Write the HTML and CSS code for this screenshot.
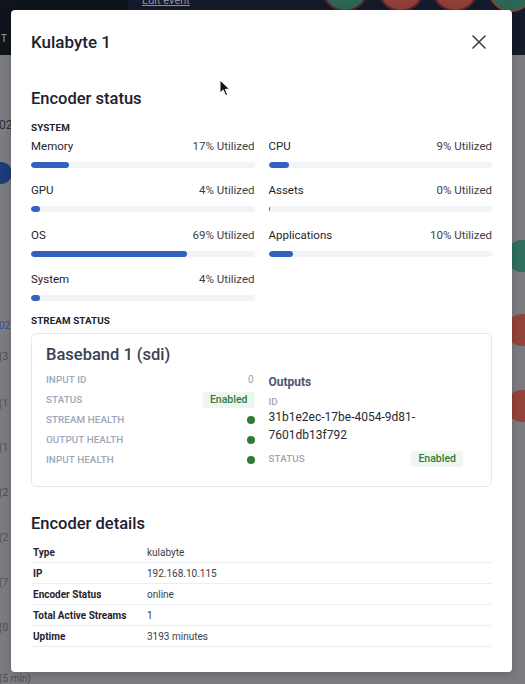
FILE: index.html
```html
<!DOCTYPE html>
<html>
<head>
<meta charset="utf-8">
<link rel="stylesheet" href="styles.css">
</head>
<body>
<div class="backdrop">
  <div class="topbar">
    <span class="topbar-left"></span>
    <span class="edit-link">Edit event</span>
    <span class="glyph-t">T</span>
  </div>
  <span class="bubble bubble-g1"></span>
  <span class="bubble bubble-r1"></span>
  <span class="bubble bubble-r2"></span>
  <span class="bubble bubble-g2"></span>
  <span class="side-dot side-green"></span>
  <span class="side-dot side-red1"></span>
  <span class="side-dot side-red2"></span>
  <span class="left-dot"></span>
  <span class="bg-text t1">02</span>
  <span class="bg-text t2 blue">023</span>
  <span class="bg-text t3">(3</span>
  <span class="bg-text t4">(1</span>
  <span class="bg-text t5">(1</span>
  <span class="bg-text t6">(2</span>
  <span class="bg-text t7">(2</span>
  <span class="bg-text t8">(7</span>
  <span class="bg-text t9">(0</span>
  <span class="bg-text t10">(5 min)</span>
</div>

<div class="modal">
  <div class="modal-header">
    <h1 class="modal-title">Kulabyte 1</h1>
    <button class="close-btn" aria-label="Close">
      <svg width="14" height="14" viewBox="0 0 14 14"><path d="M1 1L13 13M13 1L1 13" stroke="#3b404d" stroke-width="1.6" stroke-linecap="round"/></svg>
    </button>
  </div>

  <h2 class="section-title first">Encoder status</h2>
  <div class="caption">SYSTEM</div>
  <div class="metrics">
    <div class="metric">
      <div class="metric-head"><span class="metric-name">Memory</span><span class="metric-val">17% Utilized</span></div>
      <div class="track"><div class="fill" style="width:17%"></div></div>
    </div>
    <div class="metric">
      <div class="metric-head"><span class="metric-name">CPU</span><span class="metric-val">9% Utilized</span></div>
      <div class="track"><div class="fill" style="width:9%"></div></div>
    </div>
    <div class="metric">
      <div class="metric-head"><span class="metric-name">GPU</span><span class="metric-val">4% Utilized</span></div>
      <div class="track"><div class="fill" style="width:4%"></div></div>
    </div>
    <div class="metric">
      <div class="metric-head"><span class="metric-name">Assets</span><span class="metric-val">0% Utilized</span></div>
      <div class="track"><div class="fill" style="width:0.6%"></div></div>
    </div>
    <div class="metric">
      <div class="metric-head"><span class="metric-name">OS</span><span class="metric-val">69% Utilized</span></div>
      <div class="track"><div class="fill" style="width:70%"></div></div>
    </div>
    <div class="metric">
      <div class="metric-head"><span class="metric-name">Applications</span><span class="metric-val">10% Utilized</span></div>
      <div class="track"><div class="fill" style="width:11%"></div></div>
    </div>
    <div class="metric">
      <div class="metric-head"><span class="metric-name">System</span><span class="metric-val">4% Utilized</span></div>
      <div class="track"><div class="fill" style="width:4%"></div></div>
    </div>
  </div>

  <div class="caption stream-caption">STREAM STATUS</div>
  <div class="stream-card">
    <div class="stream-title">Baseband 1 (sdi)</div>
    <div class="stream-grid">
      <div class="stream-col">
        <div class="kv"><span class="k">INPUT ID</span><span class="v-num">0</span></div>
        <div class="kv"><span class="k">STATUS</span><span class="badge">Enabled</span></div>
        <div class="kv"><span class="k">STREAM HEALTH</span><span class="dot"></span></div>
        <div class="kv"><span class="k">OUTPUT HEALTH</span><span class="dot"></span></div>
        <div class="kv"><span class="k">INPUT HEALTH</span><span class="dot"></span></div>
      </div>
      <div class="stream-col outputs">
        <div class="outputs-title">Outputs</div>
        <div class="k id-label">ID</div>
        <div class="id-value">31b1e2ec-17be-4054-9d81-7601db13f792</div>
        <div class="kv out-status"><span class="k">STATUS</span><span class="badge">Enabled</span></div>
      </div>
    </div>
  </div>

  <h2 class="section-title details-title">Encoder details</h2>
  <table class="details">
    <tr><th>Type</th><td>kulabyte</td></tr>
    <tr><th>IP</th><td>192.168.10.115</td></tr>
    <tr><th>Encoder Status</th><td>online</td></tr>
    <tr><th>Total Active Streams</th><td>1</td></tr>
    <tr><th>Uptime</th><td>3193 minutes</td></tr>
  </table>
</div>

<svg class="cursor" width="12" height="18" viewBox="0 0 12 18"><path d="M1 1L1 14L4.2 11L6.6 16.5L8.6 15.6L6.3 10.3L10.6 10.2Z" fill="#111" stroke="#fff" stroke-width="1"/></svg>
</body>
</html>
```

FILE: styles.css
```css
* { box-sizing: border-box; }
html, body { margin: 0; padding: 0; }
body {
  width: 525px;
  height: 684px;
  overflow: hidden;
  position: relative;
  background: #7b7c80;
  font-family: Roboto, "Liberation Sans", sans-serif;
  color: #22262f;
}

/* ---------- backdrop (dimmed page behind the modal) ---------- */
.backdrop { position: absolute; inset: 0; }
.topbar {
  position: absolute; left: 0; top: 0; width: 525px; height: 55px;
  background: #151a2a;
}
.topbar-left {
  position: absolute; left: 0; top: 0; width: 128px; height: 55px; background: #0f131c;
}
.edit-link {
  position: absolute; left: 142px; top: -6px; font-size: 11px; line-height: 13px; color: #8d93a3;
  text-decoration: underline;
}
.glyph-t { position: absolute; left: 1px; top: 33px; font-size: 10px; color: #9aa0ad; }
.bubble {
  position: absolute; width: 46px; height: 46px; border-radius: 50%; top: -34px;
  border: 2px solid #5a2328;
}
.bubble-g1 { left: 322px; background: #2c6656; }
.bubble-r1 { left: 378px; background: #8f3f37; }
.bubble-r2 { left: 432px; background: #8f3f37; }
.bubble-g2 { left: 488px; background: #2c6656; border-color: #7a4a2e; }
.side-dot { position: absolute; width: 32px; height: 32px; border-radius: 50%; left: 506px; }
.side-green { top: 240px; background: #2e6e5c; }
.side-red1 { top: 314px; background: #93433a; }
.side-red2 { top: 390px; background: #93433a; }
.left-dot { position: absolute; left: -10px; top: 162px; width: 22px; height: 22px; border-radius: 50%; background: #1f3a78; }
.bg-text { position: absolute; left: -1px; font-size: 10px; color: #4c4e55; }
.bg-text.blue { color: #2e4f95; }
.t1 { top: 118px; font-size: 12px; color: #2a2c32; }
.t2 { top: 320px; }
.t3 { top: 351px; }
.t4 { top: 398px; }
.t5 { top: 442px; }
.t6 { top: 487px; }
.t7 { top: 532px; }
.t8 { top: 577px; }
.t9 { top: 622px; }
.t10 { top: 673px; }

/* ---------- modal ---------- */
.modal {
  position: absolute;
  left: 11px; top: 10px;
  width: 501px; height: 662px;
  background: #fff;
  border-radius: 4px;
  padding: 22px 20px 0 20px;
  box-shadow: 0 2px 8px rgba(0,0,0,0.18);
}
.modal-header {
  display: flex; justify-content: space-between; align-items: center;
  height: 20px;
}
.modal-title {
  margin: 0; font-size: 17px; font-weight: 500; line-height: 20px; color: #1c2030;
}
.close-btn {
  border: 0; background: none; padding: 0; margin-right: 6px;
  width: 14px; height: 14px; display: flex;
}
.section-title {
  margin: 0; font-size: 16.5px; font-weight: 500; line-height: 20px; color: #1c2030;
}
.section-title.first { margin-top: 37px; }
.caption {
  font-size: 9.8px; font-weight: 700; line-height: 12px; color: #20242e;
  margin-top: 13px; letter-spacing: 0.1px;
}

.metrics {
  display: grid;
  grid-template-columns: 1fr 1fr;
  column-gap: 14px;
  row-gap: 15.3px;
  margin-top: 5px;
}
.metric-head {
  display: flex; justify-content: space-between;
  font-size: 11.5px; line-height: 14px;
}
.metric-name { color: #1f232c; }
.metric-val { color: #3d414a; }
.track {
  margin-top: 9px; height: 6px; border-radius: 3px; background: #f1f3f7; overflow: hidden;
}
.fill { height: 100%; background: #3361c0; border-radius: 3px; }

.stream-caption { margin-top: 14px; }
.stream-card {
  margin-top: 6px;
  border: 1px solid #e6e8ee;
  border-radius: 6px;
  padding: 11px 14px 16px 14px;
}
.stream-title { font-size: 16.5px; line-height: 20px; color: #3b4152; font-weight: 500; }
.stream-grid {
  margin-top: 5px;
  display: grid; grid-template-columns: 1fr 1fr; column-gap: 14px;
}
.kv { display: flex; justify-content: space-between; align-items: center; height: 20px; }
.k { font-size: 9.8px; font-weight: 500; color: #a0a6b9; letter-spacing: 0.1px; }
.v-num { font-size: 10px; color: #9ea3b4; padding-right: 1px; }
.badge {
  font-size: 10.5px; font-weight: 500; color: #327a3c; background: #eef7ef;
  border-radius: 3px; padding: 2px 7px; line-height: 12px;
}
.dot { width: 8px; height: 8px; border-radius: 50%; background: #2e7a36; }
.outputs-title { margin-top: 4px; font-size: 12px; font-weight: 700; line-height: 16px; color: #4c5573; }
.id-label { margin-top: 6px; line-height: 12px; display: block; }
.id-value { font-size: 12px; line-height: 18px; color: #262a33; }
.out-status { margin-top: 5px; margin-right: 14px; }

.details-title { margin-top: 27px; }
.details {
  margin-top: 8px; width: 100%; border-collapse: collapse;
  font-size: 10px; color: #2a2e37;
}
.details tr { border-bottom: 1px solid #edeef2; height: 21px; }
.details th {
  text-align: left; font-weight: 700; width: 114px; padding: 0 0 0 2px; color: #1f232c;
}
.details td { padding: 0 0 0 2px; color: #3a3e48; }

.cursor { position: absolute; left: 219px; top: 79px; }
```
